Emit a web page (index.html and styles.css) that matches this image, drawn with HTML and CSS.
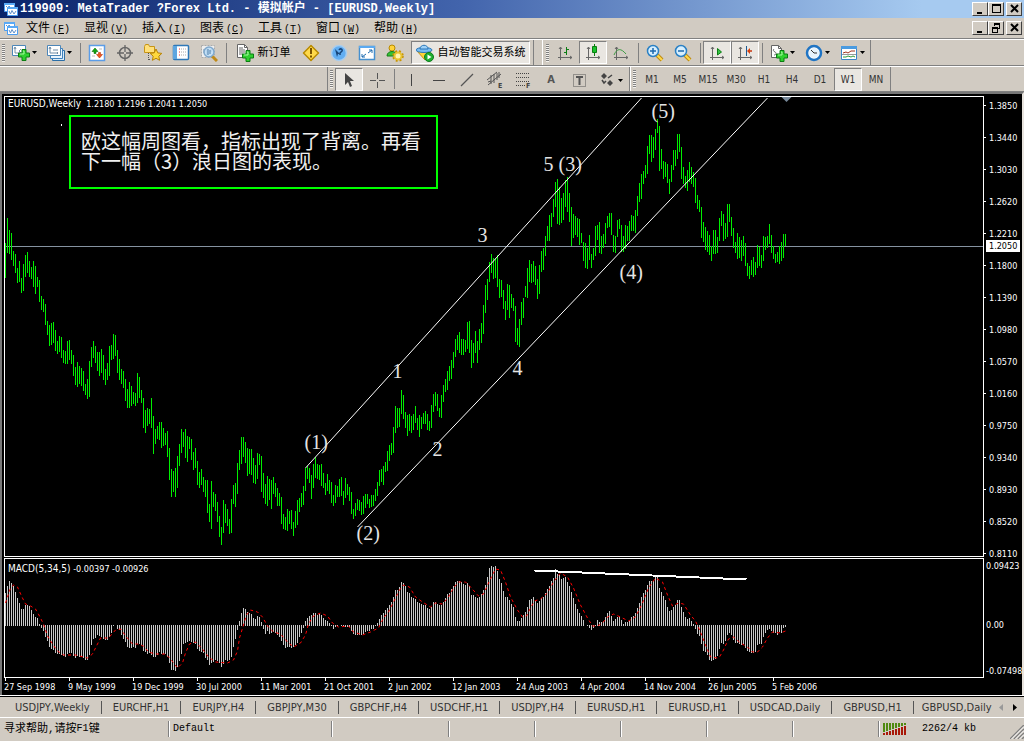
FILE: index.html
```html
<!DOCTYPE html>
<html lang="zh-CN">
<head>
<meta charset="utf-8">
<title>119909: MetaTrader - [EURUSD,Weekly]</title>
<link rel="stylesheet" href="styles.css">
</head>
<body>
<svg class="defs" aria-hidden="true">
  <symbol id="app" viewBox="0 0 16 16">
    <path d="M1.5 2.5h10v8h-10z" fill="#fff" stroke="#4a9cf0"/><path d="M1 2h11v2H1z" fill="#5aa9f5"/>
    <path d="M3 5l2 2 1-2 2 2" fill="none" stroke="#5f8fc8"/>
    <path d="M4.500 6.500h10v8h-10z" fill="#fff" stroke="#4a9cf0"/><path d="M4 6h11v2H4z" fill="#5aa9f5"/>
    <path d="M6 10l1.500 3L9 9.500l2 3.500 2-3" fill="none" stroke="#5f8fc8"/>
  </symbol>
  <symbol id="plus" viewBox="0 0 12 12">
    <path d="M4 0.500h4V4h3.500v4H8v3.500H4V8H0.500V4H4z" fill="#2fd02f" stroke="#0a7d12"/><path d="M5 2h1v3H2" fill="none" stroke="#a6f7a0"/>
  </symbol>
  <symbol id="caret" viewBox="0 0 5 3"><path d="M0 0h5L2.500 3z" fill="#000"/></symbol>
</svg>

<header class="titlebar">
  <svg class="app-icon"><use href="#app"/></svg>
  <h1 class="title">119909: MetaTrader ?Forex Ltd. - 模拟帐户 - [EURUSD,Weekly]</h1>
  <div class="winbtns">
    <button class="winbtn" aria-label="Minimize"><svg viewBox="0 0 11 10"><path d="M2 8h5v2H2z"/></svg></button>
    <button class="winbtn" aria-label="Maximize"><svg viewBox="0 0 11 10"><path d="M1 0h9v9H1zM2 2v6h7V2z" fill-rule="evenodd"/></svg></button>
    <button class="winbtn winbtn-close" aria-label="Close"><svg viewBox="0 0 11 10"><path d="M2 1l7 7M9 1L2 8" stroke="#000" stroke-width="2"/></svg></button>
  </div>
</header>

<nav class="menubar">
  <svg class="app-icon"><use href="#app"/></svg>
  <button class="menu">文件<span class="key">(<u>F</u>)</span></button>
  <button class="menu">显视<span class="key">(<u>V</u>)</span></button>
  <button class="menu">插入<span class="key">(<u>I</u>)</span></button>
  <button class="menu">图表<span class="key">(<u>C</u>)</span></button>
  <button class="menu">工具<span class="key">(<u>T</u>)</span></button>
  <button class="menu">窗口<span class="key">(<u>W</u>)</span></button>
  <button class="menu">帮助<span class="key">(<u>H</u>)</span></button>
  <div class="winbtns">
    <button class="winbtn" aria-label="Minimize chart"><svg viewBox="0 0 11 10"><path d="M2 8h5v2H2z"/></svg></button>
    <button class="winbtn" aria-label="Restore chart"><svg viewBox="0 0 11 10"><path d="M3 0h6v6H7V5h1V2H4v1H3zM1 4h6v6H1zM2 6v3h4V6z" fill-rule="evenodd"/></svg></button>
    <button class="winbtn winbtn-close" aria-label="Close chart"><svg viewBox="0 0 11 10"><path d="M2 1l7 7M9 1L2 8" stroke="#000" stroke-width="2"/></svg></button>
  </div>
</nav>

<div class="toolbar">
  <div class="group">
    <span class="grip"></span>
    <button class="tool tool-drop" aria-label="New chart"><svg viewBox="0 0 18 18"><path d="M.5 1.500h13v10H.5z" fill="#fff" stroke="#4d86b8"/><path d="M3 3v6h8M3 3l-1 2M3 3l1 2M9 5l-2 2 2 2" fill="none" stroke="#7792a8"/><use href="#plus" x="6" y="5" width="12" height="12"/></svg><svg class="caret"><use href="#caret"/></svg></button>
    <button class="tool tool-drop" aria-label="Profiles"><svg viewBox="0 0 18 18"><path d="M5.500 6.500h12v10h-12z" fill="#d8ebfa" stroke="#2c6ea6"/><path d="M3.500 4.500h12v10h-12z" fill="#e8f4fd" stroke="#3f82bd"/><path d="M.5 1.500h13v10H.5z" fill="#fff" stroke="#4d86b8"/><path d="M3 3v6h8M2 5l1-2 1 2M10 8l1 1-1 1M6 6h5" fill="none" stroke="#6e8ca6"/></svg><svg class="caret"><use href="#caret"/></svg></button>
    <span class="sep"></span>
    <button class="tool" aria-label="Market watch"><svg viewBox="0 0 18 18"><path d="M1.500 1.500h15v15h-15z" fill="#fff" stroke="#5b9de8" stroke-width="1.500"/><path d="M4 7.500l3-3.500 3 3.500H8v2H6v-2z" fill="#12a612" stroke="#087008" stroke-width=".6"/><path d="M8.500 10.500l3 3.500 3-3.500h-2v-2h-2v2z" fill="#f2551d" stroke="#b8320c" stroke-width=".6"/><path d="M4 12h3M11 5h3" stroke="#bbb"/></svg></button>
    <button class="tool" aria-label="Data window"><svg viewBox="0 0 18 18"><circle cx="9" cy="9" r="5.500" fill="none" stroke="#666" stroke-width="1.500"/><path d="M9 1v7M9 10v7M1 9h7M10 9h7" stroke="#666" stroke-width="1.300"/></svg></button>
    <button class="tool" aria-label="Navigator"><svg viewBox="0 0 18 18"><path d="M.5 2.500l1-2h3l1 2h5v6H.5z" fill="#ffe07a" stroke="#c69416"/><path d="M4.500 9v7M5 15.500h2" stroke="#555" stroke-dasharray="1 1"/><path d="M12 5l1.800 3.900 4 .5-3 2.800.8 4.100-3.600-2-3.600 2 .8-4.100-3-2.800 4-.5z" fill="#ffd83d" stroke="#b98300"/></svg></button>
    <button class="tool" aria-label="Terminal"><svg viewBox="0 0 18 18"><rect x="1.500" y="1.500" width="15" height="14" rx="1" fill="#fff" stroke="#2e78b8" stroke-width="1.500"/><path d="M1 2h4v13H1z" fill="#5ea6e0"/><path d="M7 5h1M7 8h1M7 11h1" stroke="#e33"/><path d="M9 5h6M9 8h6M9 11h6" stroke="#aaa" stroke-dasharray="1 1"/></svg></button>
    <button class="tool" aria-label="Strategy tester"><svg viewBox="0 0 18 18"><path d="M1.500 1.500h13v12h-13z" fill="#eee" stroke="#aaa" stroke-dasharray="2 1"/><path d="M4 9V5M7 11V4M11 8V5" stroke="#7792a8"/><path d="M12 12l5 5" stroke="#c08a18" stroke-width="3"/><circle cx="9" cy="8" r="5" fill="#b9dcf8" fill-opacity=".8" stroke="#7fa8cc" stroke-width="1.500"/><path d="M8 5v6M10 6v4" stroke="#4c7ca8"/></svg></button>
    <span class="sep"></span>
    <button class="tool tool-order"><svg viewBox="0 0 18 18"><path d="M1.500.5h7l3 3v10h-10z" fill="#fff" stroke="#666"/><path d="M8.500.5v3h3M3 4h4M3 6h6M3 8h6M3 10h4" fill="none" stroke="#666"/><use href="#plus" x="6" y="6" width="12" height="12"/></svg>新订单</button>
    <button class="tool" aria-label="MetaEditor"><svg viewBox="0 0 18 18"><path d="M9 1.500L16.500 9 9 16.500 1.500 9z" fill="#ffd94a" stroke="#b88a00" stroke-linejoin="round" stroke-width="1.500"/><path d="M9 4v6M9 11.500v2" stroke="#7a5300" stroke-width="2"/></svg></button>
    <button class="tool" aria-label="Help"><svg viewBox="0 0 18 18"><circle cx="9" cy="9" r="7.500" fill="#62aef2" stroke="#a9cdee" stroke-width="1.500"/><path d="M5 5l5 5-2 0-1 3z" fill="#17457a"/><path d="M9 6c1-2 4-1 3 1l-2 2v2" fill="none" stroke="#17457a" stroke-width="1.500"/></svg></button>
    <button class="tool" aria-label="Full screen"><svg viewBox="0 0 18 18"><path d="M1.500 2.500h15v13h-15z" fill="#fff" stroke="#4690cf" stroke-width="1.500"/><path d="M1 2h16v2H1z" fill="#5aa9f0"/><path d="M10 9l4-3M11 6h3v3M8 10l-4 3M4 10v3h3" fill="none" stroke="#1c6aae"/></svg></button>
    <button class="tool" aria-label="Expert options"><svg viewBox="0 0 18 18"><circle cx="6" cy="4" r="3" fill="#ffd33a" stroke="#b88a00"/><path d="M1 12c0-6 10-6 10 0z" fill="#36c336" stroke="#157d15"/><circle cx="12" cy="12" r="3.500" fill="#fff3b0" stroke="#e8c430" stroke-width="2"/><circle cx="12" cy="12" r="5" fill="none" stroke="#c99500" stroke-width="1.500" stroke-dasharray="2 2"/></svg></button>
    <button class="tool tool-auto pressed"><svg viewBox="0 0 18 18"><path d="M1 7h14l-6 9z" fill="#ffd33a" stroke="#c69416"/><ellipse cx="8" cy="6" rx="8" ry="2.500" fill="#79bdf2" stroke="#2c77b8"/><path d="M4 5c0-5 8-5 8 0z" fill="#9fd2f8" stroke="#2c77b8"/><circle cx="13" cy="13" r="4.500" fill="#1fae2f" stroke="#0c7d1c"/><path d="M11.500 10.500l4 2.500-4 2.500z" fill="#fff"/></svg>自动智能交易系统</button>
  </div>
  <div class="group group-charts">
    <span class="grip"></span>
    <button class="tool" aria-label="Bar chart"><svg viewBox="0 0 18 18"><path d="M4.500 3v13M2 13.500h14M3 5l1.500-2L6 5M14 12l2 1.500-2 1.500" fill="none" stroke="#666"/><path d="M10.500 3v8M8 8.500h2M11 5.500h2" stroke="#0a7d12"/></svg></button>
    <button class="tool pressed" aria-label="Candlesticks"><svg viewBox="0 0 18 18"><path d="M4.500 3v13M2 13.500h14M3 5l1.500-2L6 5M14 12l2 1.500-2 1.500" fill="none" stroke="#666"/><path d="M10.500 0v12" stroke="#0a7d12"/><path d="M8.500 2.500h4v6h-4z" fill="#19c22c" stroke="#0a7d12"/></svg></button>
    <button class="tool" aria-label="Line chart"><svg viewBox="0 0 18 18"><path d="M4.500 3v13M2 13.500h14M3 5l1.500-2L6 5M14 12l2 1.500-2 1.500" fill="none" stroke="#666"/><path d="M2 11c3-7 7-7 12-1" fill="none" stroke="#3d9c43"/></svg></button>
    <span class="sep"></span>
    <button class="tool" aria-label="Zoom in"><svg viewBox="0 0 18 18"><path d="M11 11l5 5" stroke="#bd8a12" stroke-width="4"/><path d="M11 11l5 5" stroke="#ffd84a" stroke-width="2"/><circle cx="7" cy="7" r="5.500" fill="#d7effe" stroke="#2a80c4" stroke-width="1.500"/><path d="M4 7h6M7 4v6" stroke="#1c6aae" stroke-width="1.500"/></svg></button>
    <button class="tool" aria-label="Zoom out"><svg viewBox="0 0 18 18"><path d="M11 11l5 5" stroke="#bd8a12" stroke-width="4"/><path d="M11 11l5 5" stroke="#ffd84a" stroke-width="2"/><circle cx="7" cy="7" r="5.500" fill="#d7effe" stroke="#2a80c4" stroke-width="1.500"/><path d="M4 7h6" stroke="#1c6aae" stroke-width="1.500"/></svg></button>
    <span class="sep"></span>
    <button class="tool pressed" aria-label="Auto scroll"><svg viewBox="0 0 18 18"><path d="M4.500 3v13M2 13.500h14M3 5l1.500-2L6 5M14 12l2 1.500-2 1.500" fill="none" stroke="#666"/><path d="M9.500 4.500l4 3.500-4 3z" fill="#35c244" stroke="#0a7d12"/></svg></button>
    <button class="tool pressed" aria-label="Chart shift"><svg viewBox="0 0 18 18"><path d="M4.500 3v13M2 13.500h14M3 5l1.500-2L6 5M14 12l2 1.500-2 1.500" fill="none" stroke="#666"/><path d="M10.500 2v10" stroke="#1c5a94"/><path d="M16 7h-3" stroke="#c8350c" stroke-width="1.500"/><path d="M11 7l3-3v6z" fill="#d8400f"/></svg></button>
    <span class="sep"></span>
    <button class="tool tool-drop" aria-label="Indicators"><svg viewBox="0 0 18 18"><path d="M1.500 1.500h7l3 3v9h-10z" fill="#fff" stroke="#666"/><path d="M8.500 1.500v3h3M4 5c-1 1-1 2 1 3s1 3-1 3" fill="none" stroke="#666"/><use href="#plus" x="6" y="6" width="12" height="12"/></svg><svg class="caret"><use href="#caret"/></svg></button>
    <button class="tool tool-drop" aria-label="Periods"><svg viewBox="0 0 18 18"><circle cx="9" cy="9" r="7" fill="#fff" stroke="#1f74c4" stroke-width="2.500"/><circle cx="9" cy="9" r="5" fill="#e6f3fd"/><path d="M9 9l-3-3M9 9h3" stroke="#333"/></svg><svg class="caret"><use href="#caret"/></svg></button>
    <button class="tool tool-drop" aria-label="Templates"><svg viewBox="0 0 18 18"><path d="M1.500 2.500h15v13h-15z" fill="#fff" stroke="#3a86c8"/><path d="M1 2h16v3H1z" fill="#4a9be0"/><path d="M3 9l3-1 2 1 3-2h4" fill="none" stroke="#a3331d"/><path d="M2 10.500h14" stroke="#999"/><path d="M3 13l3 0 2-1 3 1 2-1 2 1" fill="none" stroke="#2b9a35"/></svg><svg class="caret"><use href="#caret"/></svg></button>
  </div>
</div>

<div class="toolbar toolbar-line">
  <div class="group group-draw">
    <span class="grip"></span>
    <button class="tool pressed" aria-label="Cursor"><svg viewBox="0 0 18 18"><path d="M5 2v12l3-3 2 5 2-1-2-5h4z" fill="#444"/></svg></button>
    <button class="tool" aria-label="Crosshair"><svg viewBox="0 0 18 18"><path d="M9.500 2v6M9.500 11v6M2 9.500h6M11 9.500h6" stroke="#555"/></svg></button>
    <span class="sep"></span>
    <button class="tool" aria-label="Vertical line"><svg viewBox="0 0 18 18"><path d="M9.500 3v12" stroke="#444"/></svg></button>
    <button class="tool" aria-label="Horizontal line"><svg viewBox="0 0 18 18"><path d="M3 9.500h12" stroke="#444"/></svg></button>
    <button class="tool" aria-label="Trendline"><svg viewBox="0 0 18 18"><path d="M3 15L15 3" stroke="#555" stroke-width="1.300"/></svg></button>
    <button class="tool" aria-label="Channel"><svg viewBox="0 0 18 18"><path d="M1 9l10-8M2 14L15 3M5 4v9M8 3v9M11 2v7M2 11l3-1M13 1v6" stroke="#555" fill="none"/><text x="12" y="17" class="glyph-s">E</text></svg></button>
    <button class="tool" aria-label="Fibonacci"><svg viewBox="0 0 18 18"><path d="M2 2.500h14M2 6.500h14M2 10.500h14M2 14.500h9" stroke="#444" stroke-dasharray="1 1"/><text x="12" y="17" class="glyph-s">F</text></svg></button>
    <button class="tool tool-letter" aria-label="Text">A</button>
    <button class="tool" aria-label="Label"><svg viewBox="0 0 18 18"><path d="M3.500 3.500h12v12h-12z" fill="none" stroke="#555" stroke-dasharray="1 1"/><path d="M6 6h7M9.500 6v8" stroke="#555" stroke-width="2"/></svg></button>
    <button class="tool tool-drop" aria-label="Arrows"><svg viewBox="0 0 18 18"><path d="M3 5l3-3 3 3-3 3zM9 12l3-3 3 3-3 3z" fill="#444"/><path d="M10 7l4-3M4 9l2 3 2-2" stroke="#444" stroke-width="1.500" fill="none"/></svg><svg class="caret"><use href="#caret"/></svg></button>
  </div>
  <div class="group group-period">
    <span class="grip"></span>
    <button class="tool period">M1</button><button class="tool period">M5</button><button class="tool period">M15</button><button class="tool period">M30</button><button class="tool period">H1</button><button class="tool period">H4</button><button class="tool period">D1</button><button class="tool period pressed">W1</button><button class="tool period">MN</button>
  </div>
</div>

<main class="chart">
  <section class="plot plot-price">
    <svg class="canvas" role="img" aria-label="EURUSD weekly bars">
      <path d="M0 149.500H2000" stroke="#8592a0"/>
      <g transform="translate(-4.500 -97)" fill="none">
        <path class="bars" d="M5 243V278M7 218V253M9 230V254M11 233V260M13 251V266M15 254V273M17 268V283M19 261V282M21 278V293M23 264V291M25 255V277M27 252V273M29 261V277M31 267V279M33 261V287M35 266V294M37 277V287M39 280V302M41 296V310M43 299V312M45 304V325M47 321V335M49 325V346M51 323V345M53 322V343M55 330V351M57 341V354M59 336V352M61 337V358M63 350V363M65 351V364M67 341V364M69 340V360M71 350V364M73 355V376M75 367V385M77 362V387M79 366V384M81 368V386M83 371V391M85 384V395M87 379V399M89 361V397M91 347V367M93 341V358M95 346V363M97 352V371M99 352V376M101 349V373M103 355V380M105 369V385M107 363V380M109 346V376M111 345V360M113 334V359M115 335V356M117 350V373M119 359V380M121 369V384M123 371V388M125 379V401M127 389V408M129 382V408M131 386V406M133 392V404M135 393V406M137 373V403M139 377V398M141 390V403M143 398V428M145 410V433M147 408V426M149 409V424M151 398V428M153 416V454M155 429V444M157 426V439M159 422V440M161 422V448M163 428V446M165 433V445M167 431V457M169 448V480M171 469V497M173 471V492M175 468V497M177 456V488M179 444V466M181 429V453M183 432V447M185 429V458M187 436V462M189 437V449M191 439V460M193 452V470M195 448V468M197 461V485M199 472V488M201 469V485M203 477V492M205 480V497M207 480V513M209 504V522M211 481V529M213 492V507M215 494V511M217 502V522M219 516V537M221 527V545M223 500V533M225 504V523M227 509V526M229 519V534M231 499V533M233 485V504M235 483V507M237 463V494M239 450V470M241 437V464M243 437V457M245 442V463M247 448V476M249 449V474M251 449V475M253 458V483M255 465V484M257 453V479M259 454V465M261 456V492M263 473V498M265 484V504M267 476V506M269 479V500M271 480V509M273 477V494M275 483V497M277 488V506M279 493V506M281 497V524M283 514V529M285 517V530M287 509V531M289 511V524M291 510V529M293 522V536M295 511V528M297 500V525M299 498V512M301 493V507M303 486V505M305 468V491M307 466V479M309 468V483M311 475V499M313 464V488M315 457V478M317 464V479M319 465V480M321 464V486M323 473V488M325 483V495M327 474V491M329 480V494M331 482V503M333 495V506M335 485V503M337 486V497M339 479V497M341 477V496M343 491V505M345 478V498M347 484V495M349 487V501M351 492V514M353 509V519M355 503V516M357 499V510M359 500V511M361 502V515M363 496V514M365 494V508M367 494V504M369 499V508M371 495V507M373 495V506M375 489V501M377 482V496M379 470V486M381 469V482M383 466V485M385 462V472M387 451V471M389 445V461M391 443V455M393 427V453M395 406V433M397 408V428M399 408V427M401 390V414M403 395V419M405 412V428M407 415V436M409 414V431M411 416V433M413 414V430M415 406V423M417 418V430M419 415V437M421 417V429M423 413V424M425 411V424M427 414V430M429 421V431M431 405V428M433 394V412M435 392V406M437 394V411M439 408V417M441 395V418M443 385V402M445 379V392M447 371V390M449 366V381M451 360V379M453 352V368M455 339V357M457 335V350M459 332V353M461 339V355M463 339V355M465 340V352M467 322V349M469 321V353M471 340V368M473 343V363M475 331V353M477 341V363M479 329V350M481 323V343M483 305V334M485 285V313M487 279V300M489 262V282M491 254V273M493 258V279M495 258V278M497 255V287M499 279V298M501 280V297M503 290V309M505 301V320M507 284V310M509 285V318M511 294V308M513 298V311M515 306V342M517 328V345M519 319V347M521 302V325M523 298V318M525 286V297M527 268V298M529 260V282M531 264V283M533 261V282M535 266V285M537 279V299M539 265V294M541 251V272M543 248V270M545 236V256M547 226V241M549 215V241M551 213V227M553 199V217M555 182V207M557 179V224M559 187V225M561 198V223M563 193V220M565 180V207M567 177V212M569 193V222M571 207V246M573 214V238M575 216V235M577 218V237M579 219V245M581 233V243M583 242V261M585 243V268M587 248V269M589 235V260M591 254V268M593 248V260M595 226V256M597 225V240M599 222V253M601 236V254M603 234V248M605 223V244M607 216V228M609 213V227M611 213V235M613 235V252M615 236V253M617 220V237M619 219V229M621 225V252M623 236V252M625 225V249M627 226V241M629 221V241M631 215V231M633 216V231M635 210V233M637 196V216M639 183V202M641 174V199M643 171V184M645 165V178M647 146V174M649 135V154M651 135V162M653 137V158M655 129V150M657 119V133M659 126V171M661 149V169M663 161V179M665 162V177M667 164V183M669 179V194M671 165V182M673 150V170M675 150V166M677 134V159M679 134V152M681 147V179M683 167V184M685 176V188M687 170V191M689 162V182M691 167V184M693 172V187M695 178V203M697 195V209M699 200V212M701 207V238M703 222V242M705 227V250M707 231V252M709 235V255M711 246V261M713 230V254M715 230V254M717 237V253M719 218V241M721 211V226M723 214V241M725 223V239M727 204V237M729 204V222M731 217V236M733 228V248M735 242V253M737 233V259M739 237V258M741 240V261M743 236V256M745 243V266M747 263V276M749 266V279M751 260V275M753 257V277M755 262V275M757 245V268M759 247V266M761 255V268M763 236V261M765 237V250M767 236V248M769 224V244M771 235V253M773 246V259M775 254V263M777 252V262M779 246V264M781 242V261M783 234V258M785 234V246"/>
        <path d="M305 468L641 98M357 527L767 98" stroke="#fff"/>
        <path d="M781 97h10l-5 5z" fill="#778899"/>
        <path d="M61 124v2" stroke="#fff"/>
        <g class="waves">
          <text x="304" y="449">(1)</text><text x="356" y="540">(2)</text><text x="392" y="378">1</text><text x="432" y="456">2</text><text x="477" y="242">3</text><text x="512" y="375">4</text><text x="543" y="171">5 (3)</text><text x="619" y="279">(4)</text><text x="651" y="118">(5)</text>
        </g>
      </g>
    </svg>
    <p class="info"><span class="name">EURUSD,Weekly</span>&nbsp; 1.2180 1.2196 1.2041 1.2050</p>
    <p class="note">欧这幅周图看，指标出现了背离。再看下一幅（3）浪日图的表现。</p>
  </section>
  <ol class="axis axis-price">
    <li>1.3850</li><li>1.3440</li><li>1.3030</li><li>1.2620</li><li>1.2210</li><li>1.1800</li><li>1.1390</li><li>1.0980</li><li>1.0570</li><li>1.0160</li><li>0.9750</li><li>0.9340</li><li>0.8930</li><li>0.8520</li><li>0.8110</li>
    <li class="quote">1.2050</li>
  </ol>
  <section class="plot plot-macd">
    <svg class="canvas" role="img" aria-label="MACD histogram">
      <g transform="translate(-4.500 -559)" fill="none">
        <path class="hist" d="M5 626V593M7 626V586M9 626V581M11 626V583M13 626V586M15 626V592M17 626V598M19 626V603M21 626V609M23 626V609M25 626V605M27 626V605M29 626V606M31 626V610M33 626V614M35 626V617M37 626V618M39 626V624M41 625V628M43 625V631M45 625V637M47 625V641M49 625V647M51 625V649M53 625V650M55 625V653M57 625V654M59 625V654M61 625V655M63 625V656M65 625V657M67 625V654M69 625V653M71 625V653M73 625V656M75 625V658M77 625V656M79 625V657M81 625V657M83 625V658M85 625V660M87 625V660M89 625V655M91 625V645M93 625V639M95 625V638M97 625V635M99 625V636M101 625V637M103 625V639M105 625V640M107 625V640M109 625V637M111 625V633M113 625V626M117 625V629M119 625V630M121 625V635M123 625V639M125 625V642M127 625V647M129 625V648M131 625V648M133 625V647M135 625V648M137 625V644M139 625V644M141 625V645M143 625V651M145 625V652M147 625V654M149 625V653M151 625V655M153 625V657M155 625V657M157 625V655M159 625V652M161 625V654M163 625V654M165 625V654M167 625V657M169 625V663M171 625V670M173 625V670M175 625V671M177 625V667M179 625V661M181 625V654M183 625V644M185 625V643M187 625V642M189 625V641M191 625V642M193 625V643M195 625V644M197 625V649M199 625V651M201 625V652M203 625V653M205 625V658M207 625V660M209 625V665M211 625V663M213 625V662M215 625V660M217 625V661M219 625V663M221 625V667M223 625V664M225 625V660M227 625V661M229 625V660M231 625V657M233 625V647M235 625V639M237 625V630M239 626V621M241 626V613M243 626V608M245 626V609M247 626V612M249 626V613M251 626V614M253 626V618M255 626V619M257 626V616M259 626V617M261 626V622M263 625V629M265 625V634M267 625V631M269 625V634M271 625V633M273 625V632M275 625V633M277 625V635M279 625V637M281 625V641M283 625V645M285 625V648M287 625V647M289 625V647M291 625V648M293 625V647M295 625V645M297 625V643M299 625V637M301 625V633M303 625V628M305 626V621M307 626V618M309 626V616M311 626V615M313 626V613M315 626V613M317 626V615M319 626V614M321 626V615M323 626V618M325 626V620M327 626V621M329 626V623M331 625V626M333 625V629M335 625V627M337 625V626M341 625V626M343 625V626M345 625V627M347 625V627M349 625V627M351 625V631M353 625V634M355 625V635M357 625V635M359 625V635M361 625V635M363 625V634M365 625V632M367 625V631M369 625V631M371 625V629M373 625V629M375 625V626M377 626V623M379 626V619M381 626V615M383 626V613M385 626V610M387 626V608M389 626V605M391 626V602M393 626V597M395 626V590M397 626V590M399 626V587M401 626V582M403 626V583M405 626V586M407 626V592M409 626V593M411 626V597M413 626V598M415 626V599M417 626V602M419 626V603M421 626V604M423 626V605M425 626V605M427 626V608M429 626V609M431 626V607M433 626V602M435 626V602M437 626V604M439 626V605M441 626V605M443 626V602M445 626V598M447 626V594M449 626V593M451 626V589M453 626V586M455 626V582M457 626V581M459 626V581M461 626V582M463 626V584M465 626V585M467 626V583M469 626V586M471 626V595M473 626V595M475 626V597M477 626V598M479 626V597M481 626V594M483 626V590M485 626V585M487 626V577M489 626V568M491 626V566M493 626V567M495 626V566M497 626V571M499 626V579M501 626V583M503 626V591M505 626V597M507 626V597M509 626V600M511 626V604M513 626V607M515 626V617M517 626V621M519 626V621M521 626V618M523 626V615M525 626V612M527 626V607M529 626V600M531 626V599M533 626V597M535 626V601M537 626V603M539 626V601M541 626V598M543 626V597M545 626V593M547 626V589M549 626V586M551 626V581M553 626V578M555 626V569M557 626V574M559 626V575M561 626V579M563 626V578M565 626V577M567 626V582M569 626V586M571 626V592M573 626V598M575 626V604M577 626V609M579 626V613M581 626V616M583 626V620M587 625V626M589 625V628M591 625V630M593 625V628M595 625V626M597 626V620M599 626V622M601 626V622M603 626V621M605 626V617M607 626V613M609 626V611M611 626V616M613 626V621M615 626V619M617 626V617M619 626V616M621 626V620M623 626V624M625 626V622M627 626V622M629 626V621M631 626V617M633 626V616M635 626V613M637 626V608M639 626V603M641 626V597M643 626V593M645 626V590M647 626V585M649 626V581M651 626V581M653 626V581M655 626V577M657 626V577M659 626V588M661 626V592M663 626V596M665 626V600M667 626V607M669 626V611M671 626V610M673 626V607M675 626V605M677 626V600M679 626V600M681 626V607M683 626V612M685 626V617M687 626V619M689 626V618M691 626V621M693 626V624M695 625V629M697 625V634M699 625V636M701 625V644M703 625V651M705 625V652M707 625V655M709 625V660M711 625V661M713 625V660M715 625V659M717 625V656M719 625V649M721 625V643M723 625V644M725 625V641M727 625V635M729 625V633M731 625V635M733 625V640M735 625V643M737 625V643M739 625V644M741 625V645M743 625V644M745 625V648M747 625V651M749 625V652M751 625V653M753 625V653M755 625V652M757 625V645M759 625V644M761 625V644M763 625V637M765 625V633M767 625V630M769 625V629M771 625V631M773 625V633M775 625V633M777 625V635M779 625V632M781 625V633M783 625V628M785 625V627"/>
        <polyline class="signal" points="5,603 10,588 13,585 17,587 21,596 25,604 30,606 35,609 39,616 43,624 47,636 52,644 57,651 63,655 75,655 87,658 92,654 97,644 100,638 108,638 115,630 120,629 126,637 132,644 137,644 143,646 148,652 155,654 165,654 170,659 177,668 182,663 185,653 189,644 195,642 202,649 208,657 215,662 227,663 233,660 237,651 239,638 243,625 246,615 250,610 257,612 262,617 267,626 273,632 280,634 287,642 293,647 300,643 305,635 308,624 313,616 320,613 327,616 332,623 338,627 348,626 353,632 362,635 370,632 378,628 383,618 388,612 393,602 399,590 403,585 409,587 415,597 422,602 430,607 435,603 442,604 448,597 453,588 458,582 465,582 470,587 478,596 483,594 488,583 495,569 500,570 505,582 510,597 517,610 522,617 526,616 530,608 534,601 540,599 547,593 553,582 560,573 567,577 573,588 580,605 587,618 592,626 597,626 602,623 607,617 613,614 620,617 628,621 635,617 642,603 648,588 655,578 662,582 667,595 672,606 678,603 683,604 690,615 695,621 700,632 705,645 710,657 717,658 719,657 723,650 728,639 733,637 740,643 747,647 752,652 757,652 762,647 767,638 772,632 780,633 785,631"/>
        <path d="M534 570.500L746 579.500" stroke="#fff" stroke-width="2" shape-rendering="crispEdges"/>
      </g>
    </svg>
    <p class="info"><span class="name">MACD(5,34,5)</span> -0.00397 -0.00926</p>
  </section>
  <ol class="axis axis-macd"><li>0.09423</li><li class="zero">0.00</li><li class="low">-0.07498</li></ol>
  <ol class="dates">
    <li>27 Sep 1998</li><li>9 May 1999</li><li>19 Dec 1999</li><li>30 Jul 2000</li><li>11 Mar 2001</li><li>21 Oct 2001</li><li>2 Jun 2002</li><li>12 Jan 2003</li><li>24 Aug 2003</li><li>4 Apr 2004</li><li>14 Nov 2004</li><li>26 Jun 2005</li><li>5 Feb 2006</li>
  </ol>
</main>

<nav class="tabs">
  <div class="tablist">
    <button class="tab">USDJPY,Weekly</button><button class="tab">EURCHF,H1</button><button class="tab">EURJPY,H4</button><button class="tab">GBPJPY,M30</button><button class="tab">GBPCHF,H4</button><button class="tab">USDCHF,H1</button><button class="tab">USDJPY,H4</button><button class="tab">EURUSD,H1</button><button class="tab">EURUSD,H1</button><button class="tab">USDCAD,Daily</button><button class="tab">GBPUSD,H1</button><button class="tab">GBPUSD,Daily</button>
  </div>
  <button class="scroll" aria-label="Previous" disabled><svg viewBox="0 0 4 7"><path d="M4 0v7L0 3.500z" fill="#999"/></svg></button>
  <button class="scroll" aria-label="Next"><svg viewBox="0 0 4 7"><path d="M0 0v7l4-3.500z" fill="#000"/></svg></button>
</nav>

<footer class="status">
  <span class="cell cell-help">寻求帮助,请按<span class="mono">F1</span>键</span>
  <span class="cell cell-profile mono">Default</span>
  <span class="cell cell-date"></span>
  <span class="cell"></span><span class="cell"></span><span class="cell"></span><span class="cell"></span><span class="cell"></span>
  <span class="cell cell-traffic mono">
    <svg class="traffic" viewBox="0 0 24 12"><path d="M1 0v9M4 0v8M7 0v7M10 0v6M13 0v5M16 0v4M19 0v3M22 0v2" stroke="#4f8a10" stroke-width="2"/><path d="M1 10v2M4 9v3M7 8v4M10 7v5M13 6v6M16 5v7M19 4v8M22 3v9" stroke="#a81808" stroke-width="2"/></svg>
    2262/4 kb
  </span>
  <svg class="resize" viewBox="0 0 14 14"><path d="M0 14L14 0M4 14L14 4M8 14l6-6M12 14l2-2" stroke="#808080" stroke-width="1.500"/><path d="M1.500 14L14 1.500M5.500 14L14 5.500M9.500 14L14 9.500" stroke="#fff"/></svg>
</footer>
</body>
</html>
```

FILE: styles.css
```css
:root {
  --face: #d1cbc2;
  --shadow: #808080;
  --ui: "DejaVu Sans Condensed", "Noto Sans", sans-serif;
  --cjk: "Liberation Mono", "Noto Sans CJK SC", monospace;
}
* { box-sizing: border-box; }
body {
  margin: 0;
  height: 100vh;
  display: flex;
  flex-direction: column;
  background: var(--face);
  color: #000;
  font: 11px/12px var(--cjk);
  overflow: hidden;
}
button {
  margin: 0;
  padding: 0;
  border: 0;
  background: none;
  color: inherit;
  font: inherit;
  white-space: nowrap;
}
p, ol, h1 { margin: 0; padding: 0; }
ol { list-style: none; }
.defs { position: absolute; width: 0; height: 0; }
.mono { font: 10px/12px var(--cjk); }

.titlebar, .menubar {
  display: flex;
  flex: none;
  align-items: center;
  padding: 0 2px 0 3px;
}
.titlebar {
  height: 18px;
  background: linear-gradient(90deg, #0a246a, #4264ac 45%, #a6caf0 90%);
  color: #fff;
}
.title { margin-left: 1px; font: bold 12px/16px var(--cjk); white-space: nowrap; }
.app-icon { width: 16px; height: 16px; flex: none; }
.menubar { height: 21px; border-bottom: 1px solid var(--shadow); }
.menu {
  width: 58px;
  padding: 2px 0 0 7px;
  font-size: 12px;
  text-align: left;
}
.key { font-size: 10px; margin-left: 2px; }
.winbtns { display: flex; margin-left: auto; }
.winbtn {
  width: 16px;
  height: 14px;
  display: grid;
  place-items: center;
  background: var(--face);
  border: 1px solid;
  border-color: #fff #404040 #404040 #fff;
}
.winbtn svg { width: 11px; height: 10px; }
.winbtn-close { margin-left: 2px; }

.toolbar {
  display: flex;
  flex: none;
  height: 27px;
  border-top: 1px solid #fff;
  border-bottom: 1px solid var(--shadow);
}
.toolbar-line { height: 26px; padding-left: 327px; }
.group { display: flex; align-items: center; padding-left: 2px; }
.group + .group { border-left: 1px solid #fff; }
.group-charts { margin-left: 8px; border-right: 1px solid var(--shadow); }
.group:first-child { padding-right: 3px; border-right: 1px solid var(--shadow); }
.toolbar .group-draw { border-left: 1px solid var(--shadow); padding-right: 1px; }
.group-period { border-right: 1px solid var(--shadow); }
.grip {
  width: 3px;
  height: 18px;
  margin-right: 2px;
  background: repeating-linear-gradient(var(--shadow) 0 1px, #f4f2ee 1px 2px);
}
.group-charts .grip { margin-left: 1px; }
.sep {
  width: 6px;
  height: 20px;
  background: linear-gradient(90deg, transparent 3px, var(--shadow) 3px 4px, transparent 4px);
}
.tool {
  width: 28px;
  height: 23px;
  display: flex;
  align-items: center;
  justify-content: center;
}
.tool svg { width: 18px; height: 18px; flex: none; }
.tool-drop { width: 35px; gap: 2px; }
.tool .caret { width: 5px; height: 3px; }
.tool-order { width: 68px; gap: 4px; }
.tool-auto { width: 119px; gap: 4px; margin-left: 2px; }
.pressed {
  background: #e9e6e1;
  border: 1px solid;
  border-color: var(--shadow) #fff #fff var(--shadow);
}
.toolbar-line .tool { padding-top: 2px; }
.tool-letter { font: bold 11px/12px var(--ui); color: #555; }
.glyph-s { font: bold 7px var(--ui); fill: #444; }
.period { font: 10px/12px var(--ui); color: #333; }

.chart {
  flex: 1;
  min-height: 0;
  display: grid;
  grid-template-columns: minmax(0, 1fr) 38px;
  grid-template-rows: minmax(0, 1fr) 120px 18px;
  padding: 2px 0 0 2px;
  border: solid #777;
  border-width: 2px 2px 0 2px;
  border-right-color: #e8e4de;
  background: #000;
  color: #fff;
  font: 9px/12px var(--ui);
}
.plot { position: relative; overflow: hidden; border: 1px solid #fff; }
.plot-price { margin-bottom: 1px; }
.canvas { position: absolute; inset: 0; width: 100%; height: 100%; }
.bars { stroke: #0e0; }
.hist { stroke: #c8c8c8; }
.signal { stroke: #f00; stroke-dasharray: 3 3; }
.waves { fill: #e4e4e4; font: 20px "Liberation Serif", serif; }
.info { position: relative; padding: 1px 3px 3px; }
.name { font-size: 10px; }
.plot-macd .info { padding-top: 4px; }
.note {
  position: relative;
  width: 369px;
  min-height: 74px;
  margin: 2px 0 0 64px;
  padding: 14px 10px;
  border: 2px solid #0f0;
  background: #000;
  color: #f0f0f0;
  font: 20px/20px "Noto Sans CJK SC", sans-serif;
}
.axis { overflow: hidden; white-space: nowrap; }
.axis-price { position: relative; padding-top: 4px; }
.axis-price li { height: 32px; display: flex; }
.axis-price li::before { content: ""; width: 2px; height: 1px; margin: 5px 3px 0 0; background: #fff; }
.axis-price .quote {
  position: absolute;
  top: 144px;
  left: 2px;
  right: 2px;
  height: 12px;
  padding-left: 3px;
  background: #fff;
  color: #000;
}
.axis-price .quote::before { content: none; }
.axis-macd { padding: 2px 0 0 2px; }
.zero { margin-top: 47px; }
.low { margin-top: 34px; }
.dates { grid-column: 1 / -1; display: flex; overflow: hidden; }
.dates li { flex: 0 0 64px; white-space: nowrap; }
.dates li::before { content: ""; display: block; width: 1px; height: 3px; margin-left: 1px; background: #fff; }

.tabs {
  flex: none;
  height: 22px;
  display: flex;
  align-items: center;
  border-top: 1px solid #000;
  border-bottom: 1px solid #fff;
  padding: 0 2px 0 4px;
  box-shadow: 0 -1px #fff;
}
.tablist { flex: 1; min-width: 0; display: flex; overflow: hidden; }
.tab {
  flex: none;
  padding: 0 11px;
  border-right: 1px solid #555;
  color: #333;
  font: 11px/13px var(--ui);
}
.tab:last-child { border-right: 0; padding: 0 0 0 8px; }
.scroll { width: 14px; flex: none; display: flex; justify-content: center; }
.scroll svg { width: 4px; height: 7px; }

.status {
  flex: none;
  height: 24px;
  display: flex;
  align-items: center;
  padding-bottom: 2px;
  border-bottom: 1px solid #fff;
}
.cell {
  flex: 0 0 86px;
  height: 16px;
  display: flex;
  align-items: center;
  padding-left: 4px;
  border-right: 1px solid var(--shadow);
  box-shadow: 1px 0 #fff;
  white-space: nowrap;
}
.cell-help { flex-basis: 169px; }
.cell-profile { flex-basis: 163px; }
.cell-date { flex-basis: 117px; }
.cell-traffic { flex: 1; gap: 15px; border: 0; box-shadow: none; }
.traffic { width: 24px; height: 12px; }
.resize { width: 14px; height: 14px; margin-top: 6px; }
```
